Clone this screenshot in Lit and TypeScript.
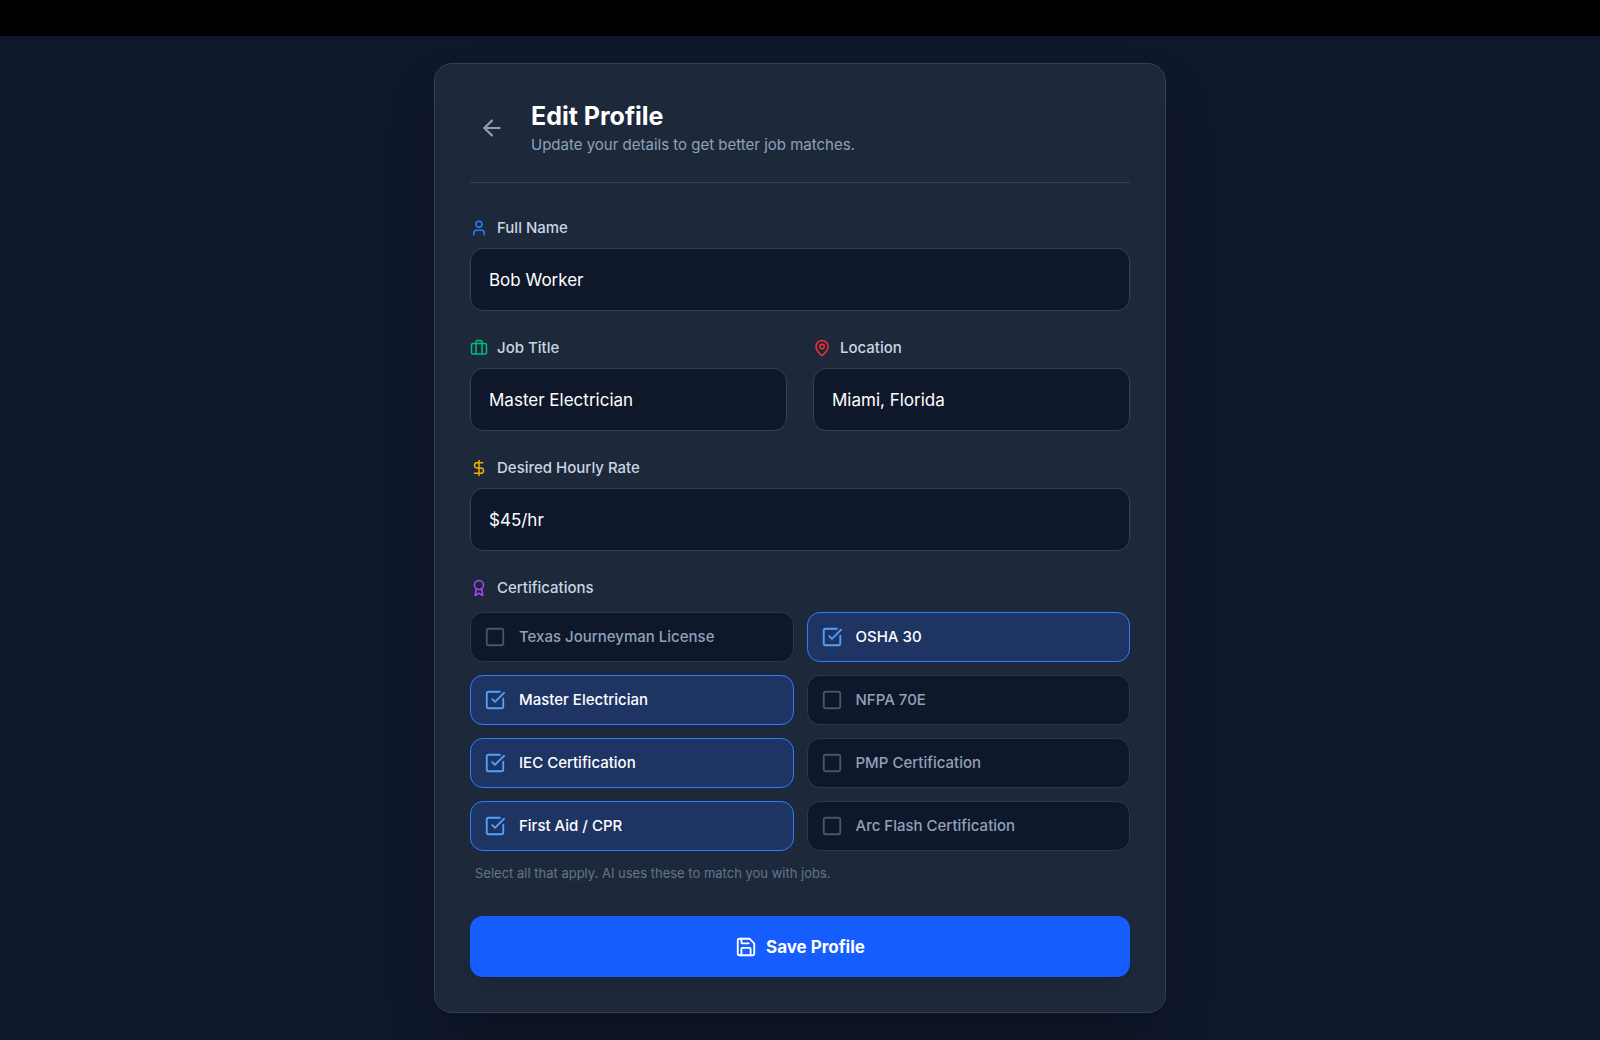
import { LitElement, html, css, svg, SVGTemplateResult } from "lit";
import { customElement, property, state } from "lit/decorators.js";
import { classMap } from "lit/directives/class-map.js";

const ICONS: Record<string, SVGTemplateResult> = {
  back: svg`<path d="m12 19-7-7 7-7"/><path d="M19 12H5"/>`,
  user: svg`<path d="M19 21v-2a4 4 0 0 0-4-4H9a4 4 0 0 0-4 4v2"/><circle cx="12" cy="7" r="4"/>`,
  briefcase: svg`<path d="M16 20V4a2 2 0 0 0-2-2h-4a2 2 0 0 0-2 2v16"/><rect width="20" height="14" x="2" y="6" rx="2"/>`,
  pin: svg`<path d="M20 10c0 4.993-5.539 10.193-7.399 11.799a1 1 0 0 1-1.202 0C9.539 20.193 4 14.993 4 10a8 8 0 0 1 16 0"/><circle cx="12" cy="10" r="3"/>`,
  dollar: svg`<path d="M12 2v20"/><path d="M17 5H9.5a3.5 3.5 0 0 0 0 7h5a3.5 3.5 0 0 1 0 7H6"/>`,
  award: svg`<path d="m15.477 12.89 1.515 8.526a.5.5 0 0 1-.81.47l-3.58-2.687a1 1 0 0 0-1.197 0l-3.586 2.686a.5.5 0 0 1-.81-.469l1.514-8.526"/><circle cx="12" cy="8" r="6"/>`,
  square: svg`<rect width="18" height="18" x="3" y="3" rx="2"/>`,
  checked: svg`<path d="M21 10.656V19a2 2 0 0 1-2 2H5a2 2 0 0 1-2-2V5a2 2 0 0 1 2-2h12.344"/><path d="m9 11 3 3L22 4"/>`,
  save: svg`<path d="M15.2 3a2 2 0 0 1 1.4.6l3.8 3.8a2 2 0 0 1 .6 1.4V19a2 2 0 0 1-2 2H5a2 2 0 0 1-2-2V5a2 2 0 0 1 2-2z"/><path d="M17 21v-7a1 1 0 0 0-1-1H8a1 1 0 0 0-1 1v7"/><path d="M7 3v4a1 1 0 0 0 1 1h7"/>`,
};

@customElement("line-icon")
class LineIcon extends LitElement {
  @property() name = "";

  static styles = css`
    :host {
      display: block;
      width: 18px;
      height: 18px;
      flex: none;
    }
    .glyph {
      display: block;
      width: 100%;
      height: 100%;
      fill: none;
      stroke: currentColor;
      stroke-width: 2;
      stroke-linecap: round;
      stroke-linejoin: round;
    }
  `;

  render() {
    return html`<svg class="glyph" viewBox="0 0 24 24" aria-hidden="true">${ICONS[this.name]}</svg>`;
  }
}

interface Field {
  id: string;
  label: string;
  icon: string;
  tone: string;
  value: string;
}

@customElement("app-root")
class AppRoot extends LitElement {
  @state() private certifications = [
    { name: "Texas Journeyman License", held: false },
    { name: "OSHA 30", held: true },
    { name: "Master Electrician", held: true },
    { name: "NFPA 70E", held: false },
    { name: "IEC Certification", held: true },
    { name: "PMP Certification", held: false },
    { name: "First Aid / CPR", held: true },
    { name: "Arc Flash Certification", held: false },
  ];

  static styles = css`
    :host {
      display: block;
      font-family: Inter, "Liberation Sans", sans-serif;
      color: #fff;
    }
    * {
      box-sizing: border-box;
    }
    .page {
      min-height: 100vh;
      background: #0f172b;
    }
    .topbar {
      height: 36px;
      background: #000;
    }
    .main {
      display: flex;
      justify-content: center;
      padding: 27px;
    }
    .card {
      width: 100%;
      max-width: 732px;
      padding: 35px;
      background: #1d293b;
      border: 1px solid #314158;
      border-radius: 18px;
      box-shadow: 0 28px 56px -13px rgba(0, 0, 0, 0.3);
    }
    .header {
      display: flex;
      align-items: center;
      gap: 17px;
      padding-bottom: 26px;
      margin-bottom: 34px;
      border-bottom: 1px solid #314158;
    }
    .back {
      padding: 9px;
      border: 0;
      border-radius: 50%;
      background: none;
      color: #90a1b9;
      cursor: pointer;
    }
    .back line-icon {
      width: 26px;
      height: 26px;
    }
    .title {
      margin: 0;
      font-size: 25px;
      line-height: 35px;
      font-weight: 700;
    }
    .subtitle {
      margin: 0;
      font-size: 15px;
      line-height: 22px;
      color: #90a1b9;
    }
    .form {
      display: flex;
      flex-direction: column;
      gap: 26px;
    }
    .pair {
      display: grid;
      grid-template-columns: 1fr 1fr;
      gap: 26px;
    }
    .field {
      display: flex;
      flex-direction: column;
      gap: 9px;
      min-width: 0;
    }
    .label {
      display: flex;
      align-items: center;
      gap: 9px;
      padding: 0;
      font-size: 15px;
      line-height: 22px;
      font-weight: 500;
      color: #cad5e2;
    }
    .blue {
      color: #2b7fff;
    }
    .green {
      color: #00bc7d;
    }
    .red {
      color: #fb2c36;
    }
    .amber {
      color: #f0b100;
    }
    .purple {
      color: #ad46ff;
    }
    .input {
      width: 100%;
      height: 63px;
      padding: 0 18px;
      border: 1px solid #314158;
      border-radius: 13px;
      background: #0f172b;
      color: #fff;
      font: 400 17px/26px Inter, "Liberation Sans", sans-serif;
      outline: none;
    }
    .input:focus {
      border-color: #2b7fff;
    }
    .group {
      display: flex;
      flex-direction: column;
      gap: 13px;
      margin: 0;
    }
    .options {
      display: grid;
      grid-template-columns: 1fr 1fr;
      gap: 13px;
    }
    .option {
      display: flex;
      align-items: center;
      gap: 13px;
      height: 50px;
      padding: 0 13px;
      border: 1px solid #2a384e;
      border-radius: 13px;
      background: #0f172b;
      color: #90a1b9;
      font-size: 15px;
      line-height: 22px;
      font-weight: 500;
      cursor: pointer;
    }
    .option.held {
      border-color: #2b7fff;
      background: #1e3463;
      color: #fff;
    }
    .tick {
      display: grid;
      color: #45556c;
    }
    .held .tick {
      color: #51a2ff;
    }
    .tick line-icon,
    .box {
      grid-area: 1 / 1;
      width: 22px;
      height: 22px;
    }
    .tick line-icon {
      pointer-events: none;
    }
    .box {
      margin: 0;
      appearance: none;
      border-radius: 4px;
      cursor: pointer;
    }
    .hint {
      margin: 0;
      padding-left: 5px;
      font-size: 13px;
      line-height: 18px;
      color: #62748e;
    }
    .save {
      display: flex;
      align-items: center;
      justify-content: center;
      gap: 9px;
      height: 61px;
      margin-top: 8px;
      border: 0;
      border-radius: 13px;
      background: #155dfc;
      box-shadow: 0 11px 17px -3px rgba(0, 0, 0, 0.1);
      color: #fff;
      font: 700 17px/26px Inter, "Liberation Sans", sans-serif;
      cursor: pointer;
    }
    .save line-icon {
      width: 22px;
      height: 22px;
    }
  `;

  private toggle(index: number) {
    this.certifications = this.certifications.map((c, i) =>
      i === index ? { ...c, held: !c.held } : c
    );
  }

  private field(f: Field) {
    return html`
      <div class="field">
        <label class="label" for=${f.id}>
          <line-icon class=${f.tone} name=${f.icon}></line-icon>${f.label}
        </label>
        <input class="input" id=${f.id} type="text" .value=${f.value} />
      </div>
    `;
  }

  render() {
    return html`
      <div class="page">
        <div class="topbar"></div>
        <main class="main">
          <section class="card">
            <header class="header">
              <button class="back" type="button" aria-label="Back">
                <line-icon name="back"></line-icon>
              </button>
              <div>
                <h1 class="title">Edit Profile</h1>
                <p class="subtitle">Update your details to get better job matches.</p>
              </div>
            </header>
            <form class="form" @submit=${(e: Event) => e.preventDefault()}>
              ${this.field({ id: "name", label: "Full Name", icon: "user", tone: "blue", value: "Bob Worker" })}
              <div class="pair">
                ${this.field({ id: "job", label: "Job Title", icon: "briefcase", tone: "green", value: "Master Electrician" })}
                ${this.field({ id: "location", label: "Location", icon: "pin", tone: "red", value: "Miami, Florida" })}
              </div>
              ${this.field({ id: "rate", label: "Desired Hourly Rate", icon: "dollar", tone: "amber", value: "$45/hr" })}
              <div class="group" role="group" aria-labelledby="certs">
                <div class="label" id="certs">
                  <line-icon class="purple" name="award"></line-icon>Certifications
                </div>
                <div class="options">
                  ${this.certifications.map(
                    (c, i) => html`
                      <label class=${classMap({ option: true, held: c.held })} for="cert-${i}">
                        <span class="tick">
                          <input
                            class="box"
                            id="cert-${i}"
                            type="checkbox"
                            .checked=${c.held}
                            @change=${() => this.toggle(i)}
                          />
                          <line-icon name=${c.held ? "checked" : "square"}></line-icon>
                        </span>
                        <span>${c.name}</span>
                      </label>
                    `
                  )}
                </div>
                <p class="hint">Select all that apply. AI uses these to match you with jobs.</p>
              </div>
              <button class="save" type="submit">
                <line-icon name="save"></line-icon>Save Profile
              </button>
            </form>
          </section>
        </main>
      </div>
    `;
  }
}
